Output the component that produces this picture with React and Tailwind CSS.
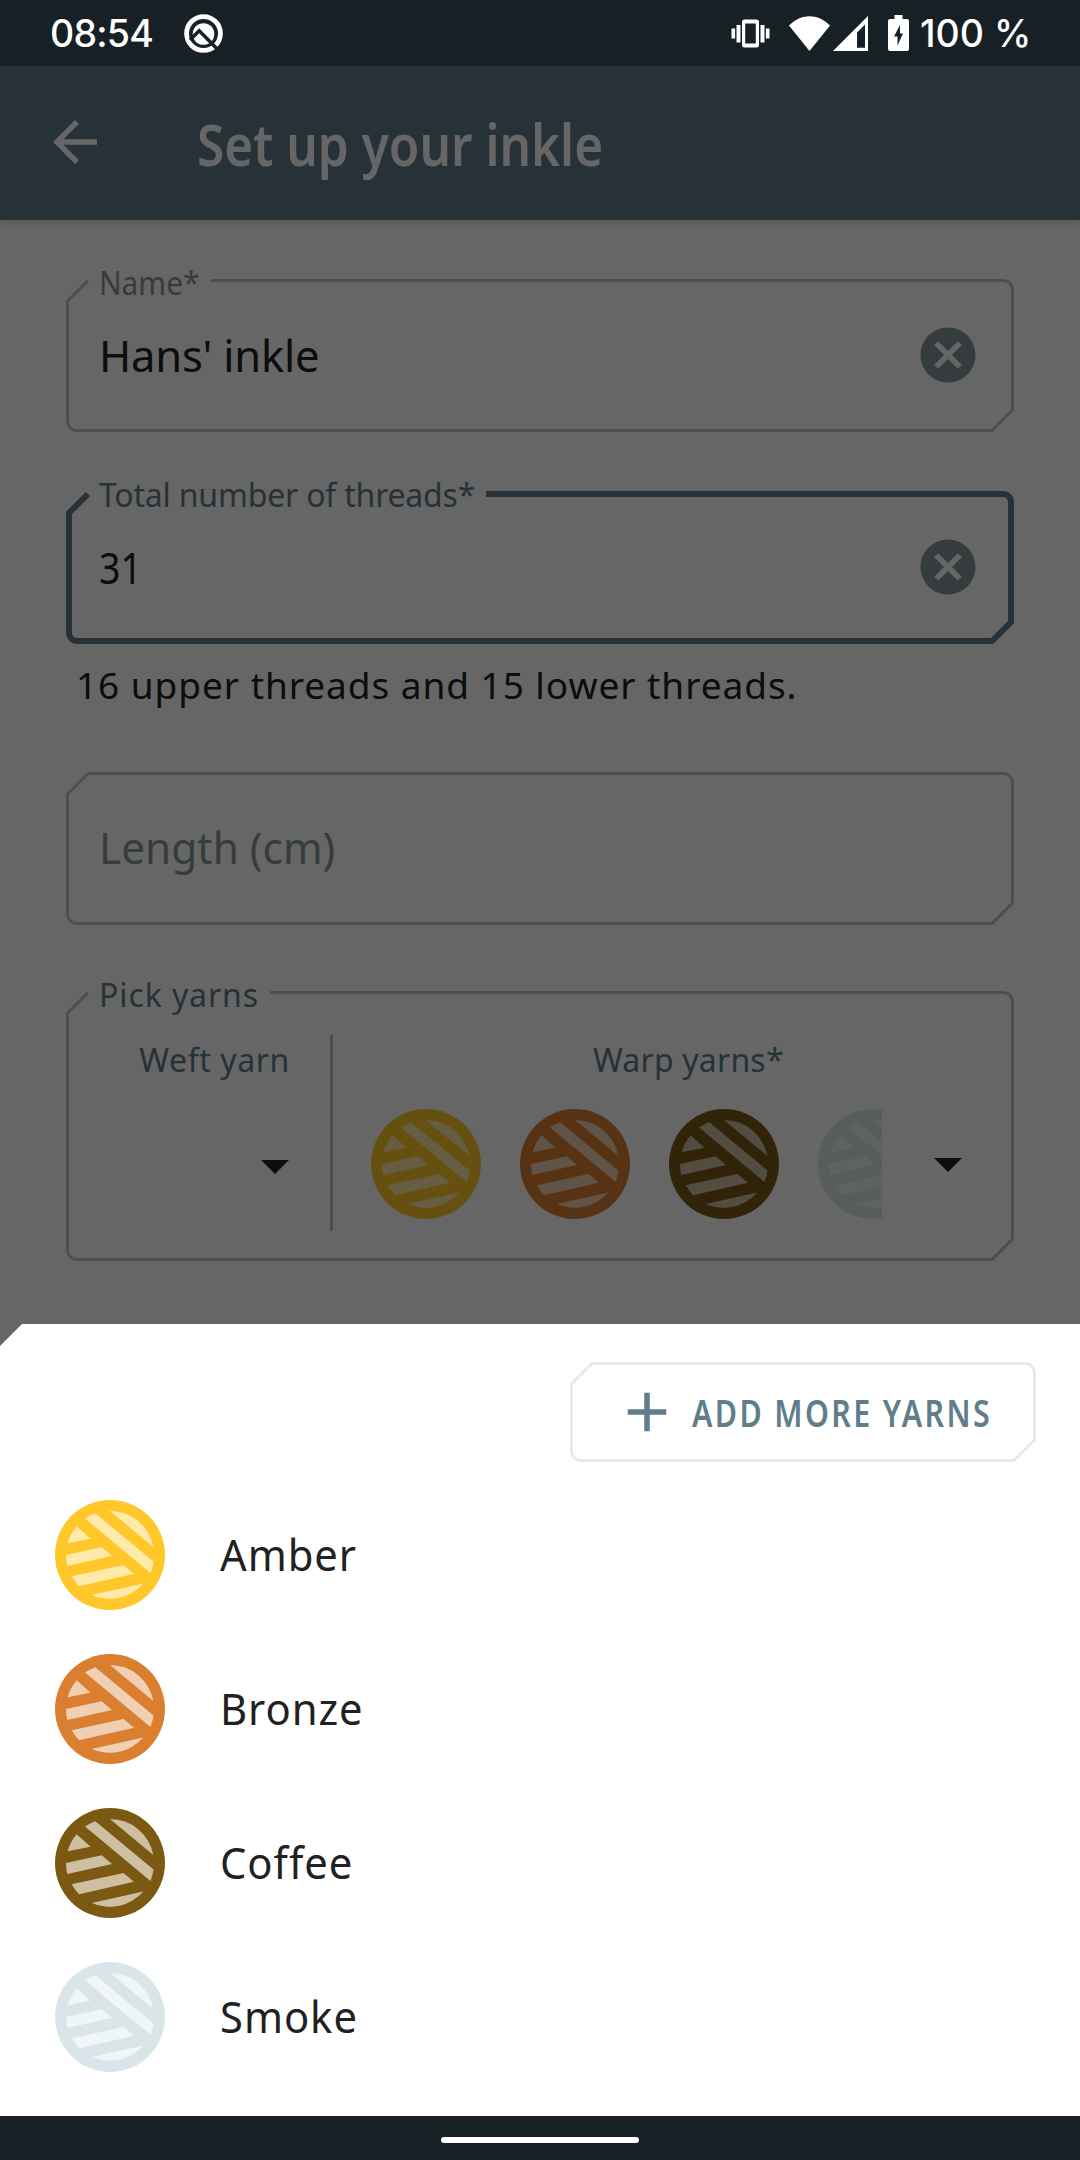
import { MdArrowBack, MdCancel, MdAdd } from "react-icons/md";

const yarns = [
  { name: "Amber", ring: "text-[#ffc72a]", thread: "fill-[#ffeaa9]" },
  { name: "Bronze", ring: "text-[#da7f30]", thread: "fill-[#f0cfb2]" },
  { name: "Coffee", ring: "text-[#7c5912]", thread: "fill-[#cebfa3]" },
  { name: "Smoke", ring: "text-[#d9e5e8]", thread: "fill-[#f0f5f6]" },
];

function YarnBall({ yarn }) {
  return (
    <svg viewBox="0 0 110 110" className={`size-[110px] shrink-0 ${yarn.ring}`}>
      <circle cx="55" cy="55" r="55" fill="currentColor" />
      <g className={yarn.thread}>
        <path d="M55 11A44 44 0 0 1 98.3 47Z" />
        <path d="M30 18.6Q35 15.3 40.3 13.3L98.5 61.5Q97.7 67.5 95.5 73Z" />
        <path d="M21.7 26.3L35.5 38.7L12.7 43.3Q15 34 21.7 26.3Z" />
        <path d="M11 55L46.7 47.3L57 55.9L12.3 66Q11 61 11 55Z" />
        <path d="M16.7 76.3L68.5 65L79 73.8L24 86.3Q19.5 81.500 16.7 76.3Z" />
        <path d="M36.7 94.9L88.300 83.500A44 44 0 0 1 36.7 94.9Z" />
      </g>
    </svg>
  );
}

/* Outline with cut top-left and bottom-right corners; gap = [from, to] leaves room for a label. */
function CutOutline({ width, height, stroke = 3, gap, className }) {
  const s = stroke / 2;
  const r = 11 - s;
  const c = 22;
  const start = gap ? gap[1] : c;
  return (
    <svg
      viewBox={`0 0 ${width} ${height}`}
      className={`absolute inset-0 size-full fill-none ${className}`}
      strokeWidth={stroke}
    >
      <path
        d={`M${start} ${s}H${width - s - r}A${r} ${r} 0 0 1 ${width - s} ${s + r}V${height - c}L${width - c} ${height - s}H${s + r}A${r} ${r} 0 0 1 ${s} ${height - s - r}V${c}L${c} ${s}${gap ? "" : "Z"}`}
      />
    </svg>
  );
}

function Caret({ className }) {
  return (
    <svg viewBox="0 0 28 14" className={`h-3.5 w-7 fill-[#212121] ${className}`}>
      <path d="M0 0H28L14 14Z" />
    </svg>
  );
}

function Label({ className, children }) {
  return (
    <span className={`absolute left-[33px] -top-[18px] origin-left whitespace-nowrap text-[32px] leading-[44px] ${className}`}>
      {children}
    </span>
  );
}

function StatusBar() {
  return (
    <div className="flex h-[66px] shrink-0 items-center bg-[#162025] pl-[50px] pr-[54px] text-white">
      <span className="w-[98px] whitespace-nowrap pt-0.5 font-['Inter'] text-[37.500px] font-medium leading-none tracking-[-0.800px]">
        08:54
      </span>
      <svg viewBox="0 0 39 39" className="ml-9 size-[39px] shrink-0 fill-none">
        <circle cx="19.5" cy="19.5" r="16.900" stroke="#fff" strokeWidth="4.800" />
        <circle cx="19.5" cy="20" r="10.800" fill="#fff" />
        <path d="M6 26L15.2 16.700L34 35.800" stroke="#162025" strokeWidth="3.400" />
      </svg>
      <svg viewBox="0 0 38 29" className="ml-auto h-[29px] w-[39px] shrink-0 fill-white">
        <path d="M0 9.500h3.600v10H0zM5 6h4v17.500H5zM29 6h4v17.500h-4zM34.400 9.500H38v10h-3.600z" />
        <path
          fillRule="evenodd"
          d="M13 .5h12a2.500 2.500 0 0 1 2.500 2.500v23a2.500 2.500 0 0 1-2.500 2.500H13a2.500 2.500 0 0 1-2.500-2.500V3A2.500 2.500 0 0 1 13 .5ZM13.700 4.500v20h10.600v-20Z"
        />
      </svg>
      <svg viewBox="0 0 41 35" className="ml-[19px] h-[35px] w-[41px] shrink-0 fill-white">
        <path d="M0 9.500C12-3 29-3 41 9.500L20.500 35Z" />
      </svg>
      <svg viewBox="0 0 35 35" className="ml-[3px] h-[35px] w-[35px] shrink-0 fill-white">
        <path fillRule="evenodd" d="M35 0V35H0ZM32 8.500L24 16.500V31.800H32Z" />
      </svg>
      <svg viewBox="0 0 21 36" className="ml-5 h-9 w-[21px] shrink-0">
        <path d="M6.500 0h8v4H19a2 2 0 0 1 2 2v28a2 2 0 0 1-2 2H2a2 2 0 0 1-2-2V6a2 2 0 0 1 2-2h4.500Z" fill="#fff" />
        <path d="M12 10L6 21.500H9.500V30.500L15 18.500H12Z" fill="#162025" />
      </svg>
      <span className="ml-[11px] w-[106px] whitespace-nowrap pt-0.5 font-['Inter'] text-[37.500px] font-medium leading-none">
        100 %
      </span>
    </div>
  );
}

function Field({ label, value, focused, gap }) {
  return (
    <div className="relative flex h-[153px] items-center justify-between pl-[33px] pr-[33px]">
      <CutOutline
        width={948}
        height={153}
        stroke={focused ? 6 : 3}
        gap={gap}
        className={focused ? "stroke-[#607d8b]" : "stroke-[#b9c5c8]"}
      />
      {label}
      {value}
      {label && <MdCancel className="mb-0.5 size-[66px] text-[#84979c]" />}
    </div>
  );
}

export default function App() {
  return (
    <div className="flex h-[2160px] w-[1080px] flex-col overflow-hidden bg-white font-['Noto_Sans','Open_Sans',sans-serif] text-[#212121]">
      <StatusBar />
      <main className="relative h-[1280px] shrink-0">
        <header className="relative flex h-[154px] items-center bg-[#607d8b] pl-[42px] text-white shadow-[0_2px_8px_rgba(0,0,0,0.2)]">
          <MdArrowBack className="mb-[3px] size-[66px]" />
          <h1 className="ml-[89px] origin-left scale-x-[0.854] whitespace-nowrap pt-[2px] text-[58px] font-semibold leading-none">
            Set up your inkle
          </h1>
        </header>
        <div className="flex flex-col px-[66px] pt-[59px]">
          <Field
            label={<Label className="scale-x-[0.930] text-[#84979c]">Name*</Label>}
            gap={[22, 145]}
            value={<span className="pt-px text-[43.500px] leading-none tracking-[-0.200px]">Hans' inkle</span>}
          />
          <div className="h-[59px]" />
          <Field
            focused
            label={<Label className="tracking-[-0.200px] text-[#607d8b]">Total number of threads*</Label>}
            gap={[22, 420]}
            value={<span className="origin-left scale-x-[0.860] pt-px text-[43.500px] leading-none">31</span>}
          />
          <p className="pl-2.5 pt-4 text-[37px] leading-[50px] tracking-[0.950px]">
            16 upper threads and 15 lower threads.
          </p>
          <div className="h-[62px]" />
          <Field
            value={
              <span className="origin-left scale-x-[0.974] pb-0.5 text-[43.500px] leading-none text-[#84979c]">
                Length (cm)
              </span>
            }
          />
          <section className="relative mt-[66px] flex h-[270px]">
            <CutOutline width={948} height={270} gap={[22, 204]} className="stroke-[#b9c5c8]" />
            <Label className="tracking-[0.900px] text-[#607d8b]">Pick yarns</Label>
            <div className="flex w-[264px] flex-col items-end pr-[41px] pt-[47px]">
              <span className="-mr-px text-[32px] leading-[44px] tracking-[0.600px] text-[#607d8b]">Weft yarn</span>
              <Caret className="mt-[78px]" />
            </div>
            <div className="mt-11 h-[196px] w-[3px] bg-[#c0c0c0]" />
            <div className="flex flex-1 flex-col pt-[47px]">
              <span className="pl-[260px] text-[32px] leading-[44px] tracking-[0.200px] text-[#607d8b]">Warp yarns*</span>
              <div className="mt-[27px] flex items-center pl-[38px]">
                <div className="flex w-[511px] gap-[39px] overflow-hidden">
                  {yarns.map((y) => (
                    <YarnBall key={y.name} yarn={y} />
                  ))}
                </div>
                <Caret className="ml-[52px] mt-0.5" />
              </div>
            </div>
          </section>
        </div>
        <div className="absolute inset-0 bg-black/60" />
      </main>
      <section className="relative -mt-[22px] flex h-[792px] shrink-0 flex-col bg-white [clip-path:polygon(22px_0,100%_0,100%_100%,0_100%,0_22px)]">
        <button className="relative ml-[570px] mt-[38px] flex h-[100px] w-[466px] items-center pl-11">
          <CutOutline width={466} height={100} className="stroke-[#e6eaea]" />
          <MdAdd className="size-[66px] shrink-0 text-[#607d8b]" />
          <span className="ml-3 w-[300px] origin-left scale-x-[0.790] whitespace-nowrap text-left text-[38.500px] font-semibold leading-none tracking-[3px] text-[#607d8b]">
            ADD MORE YARNS
          </span>
        </button>
        <ul className="mt-4">
          {yarns.map((y) => (
            <li key={y.name} className="flex h-[154px] items-center gap-[55px] pl-[55px]">
              <YarnBall yarn={y} />
              <span className="origin-left scale-x-[0.960] text-[43.500px] leading-none tracking-[1px]">{y.name}</span>
            </li>
          ))}
        </ul>
      </section>
      <nav className="flex h-11 shrink-0 items-center justify-center bg-[#162025]">
        <div className="mt-1 h-1.5 w-[198px] rounded-full bg-white" />
      </nav>
    </div>
  );
}
